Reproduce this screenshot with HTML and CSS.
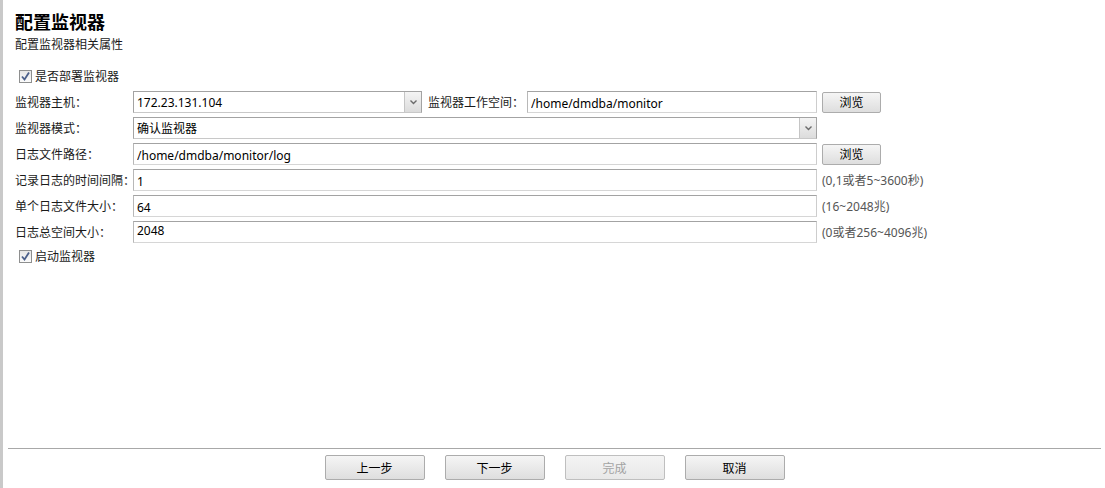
FILE: index.html
```html
<!DOCTYPE html>
<html lang="zh">
<head>
  <meta charset="UTF-8" />
  <title>配置监视器</title>
  <link rel="stylesheet" href="styles.css">
</head>
<body>
  <div class="page">
    <div class="header">
      <h2 class="title">配置监视器</h2>
      <div class="subtitle">配置监视器相关属性</div>
    </div>

    <label class="check">
      <span class="box"><svg width="11" height="11" viewBox="0 0 11 11"><path d="M2 5.5 L4.5 8.5 L9 1.5" fill="none" stroke="#4a5f8a" stroke-width="1.8"/></svg></span>
      是否部署监视器
    </label>

    <div class="form">
      <div class="row">
        <span class="lbl">监视器主机：</span>
        <div class="field split">
          <div class="select host">
            <span class="val">172.23.131.104</span>
            <span class="arrow"><svg width="9" height="6" viewBox="0 0 9 6"><path d="M1.5 1.5 L4.5 4.5 L7.5 1.5" fill="none" stroke="#6b6b6b" stroke-width="1.4"/></svg></span>
          </div>
          <span class="lbl inner">监视器工作空间：</span>
          <input class="input grow" type="text" value="/home/dmdba/monitor">
        </div>
        <button class="btn small">浏览</button>
      </div>

      <div class="row">
        <span class="lbl">监视器模式：</span>
        <div class="field">
          <div class="select">
            <span class="val">确认监视器</span>
            <span class="arrow"><svg width="9" height="6" viewBox="0 0 9 6"><path d="M1.5 1.5 L4.5 4.5 L7.5 1.5" fill="none" stroke="#6b6b6b" stroke-width="1.4"/></svg></span>
          </div>
        </div>
      </div>

      <div class="row">
        <span class="lbl">日志文件路径：</span>
        <div class="field"><input class="input" type="text" value="/home/dmdba/monitor/log"></div>
        <button class="btn small">浏览</button>
      </div>

      <div class="row">
        <span class="lbl">记录日志的时间间隔：</span>
        <div class="field"><input class="input" type="text" value="1"></div>
        <span class="hint">(0,1或者5~3600秒)</span>
      </div>

      <div class="row">
        <span class="lbl">单个日志文件大小：</span>
        <div class="field"><input class="input" type="text" value="64"></div>
        <span class="hint">(16~2048兆)</span>
      </div>

      <div class="row">
        <span class="lbl">日志总空间大小：</span>
        <div class="field"><input class="input top" type="text" value="2048"></div>
        <span class="hint">(0或者256~4096兆)</span>
      </div>
    </div>

    <label class="check second">
      <span class="box"><svg width="11" height="11" viewBox="0 0 11 11"><path d="M2 5.5 L4.5 8.5 L9 1.5" fill="none" stroke="#4a5f8a" stroke-width="1.8"/></svg></span>
      启动监视器
    </label>

    <div class="spacer"></div>

    <div class="footer">
      <button class="btn">上一步</button>
      <button class="btn">下一步</button>
      <button class="btn" disabled>完成</button>
      <button class="btn">取消</button>
    </div>
  </div>
</body>
</html>
```

FILE: styles.css
```css
/* Base */
html, body {
  margin: 0;
  padding: 0;
  background: #fff;
}

body {
  font-family: "Noto Sans", "Noto Sans CJK SC", sans-serif;
  font-size: 12px;
  color: #1a1a1a;
  text-spacing-trim: space-all; /* keep the full-width colons wide */
}

.page {
  display: flex;
  flex-direction: column;
  height: 488px;
  box-sizing: border-box;
  border-left: 3px solid #c9c9c9;
  padding-left: 12px;
}

/* Header */
.header {
  padding-top: 10px;
}

.title {
  margin: 0;
  font-size: 18px;
  line-height: 24px;
  font-weight: bold;
  color: #000;
}

.subtitle {
  margin-top: 3px;
  line-height: 16px;
}

/* Checkboxes */
.check {
  display: flex;
  align-items: center;
  height: 20px;
  margin-top: 13px;
  padding-left: 4px;
}

.check.second {
  margin-top: 3px;
}

.box {
  display: flex;
  align-items: center;
  justify-content: center;
  width: 11px;
  height: 11px;
  margin-right: 3px;
  border: 1px solid #8e8f8f;
  background: linear-gradient(#e6e6e6, #fbfbfb);
}

/* Form rows */
.form {
  display: flex;
  flex-direction: column;
  gap: 4px;
  margin-top: 5px;
}

.row {
  display: flex;
  align-items: center;
  height: 22px;
}

.lbl {
  width: 118px;
  flex: none;
  white-space: nowrap;
}

.lbl.inner {
  width: auto;
  margin: 0 3px 0 6px;
}

.field {
  width: 684px;
  flex: none;
  display: flex;
  height: 22px;
}

.split {
  align-items: center;
}

.input {
  width: 100%;
  height: 22px;
  box-sizing: border-box;
  margin: 0;
  padding: 2px 3px 0;
  border: 1px solid;
  border-color: #a3a3a3 #cdcdcd #d6d6d6 #b8b8b8;
  font-family: inherit;
  font-size: 12px;
  color: #000;
  background: #fff;
  outline: none;
}

.input.top {
  padding-top: 0;
  padding-bottom: 3px;
}

.input.grow {
  flex: 1;
  width: auto;
  min-width: 0;
}

.select {
  display: flex;
  align-items: stretch;
  width: 100%;
  height: 22px;
  box-sizing: border-box;
  border: 1px solid;
  border-color: #a3a3a3 #a3a3a3 #c8c8c8 #a3a3a3;
  background: #fff;
}

.select.host {
  width: 289px;
  flex: none;
}

.select .val {
  flex: 1;
  padding: 2px 3px 0;
  line-height: 18px;
  color: #000;
}

.select .arrow {
  display: flex;
  align-items: center;
  justify-content: center;
  width: 16px;
  border-left: 1px solid #c5c5c5;
  background: linear-gradient(#f4f4f4, #dcdcdc);
}

.hint {
  margin-left: 5px;
  color: #555;
  white-space: nowrap;
}

/* Buttons */
.btn {
  width: 100px;
  height: 25px;
  margin: 0;
  padding: 0;
  border: 1px solid #acacac;
  border-radius: 2px;
  background: linear-gradient(#f5f5f5, #dedede);
  font-family: inherit;
  font-size: 12px;
  color: #000;
}

.btn.small {
  width: 59px;
  height: 21px;
  margin-left: 5px;
}

.btn:disabled {
  color: #a3a3a3;
  border-color: #bfbfbf;
  background: linear-gradient(#f4f4f4, #e8e8e8);
}

.spacer {
  flex: 1;
}

/* Footer */
.footer {
  display: flex;
  justify-content: center;
  gap: 20px;
  margin: 0 4px 8px -7px;
  padding-top: 6px;
  border-top: 1px solid #a8a8a8;
}
```
